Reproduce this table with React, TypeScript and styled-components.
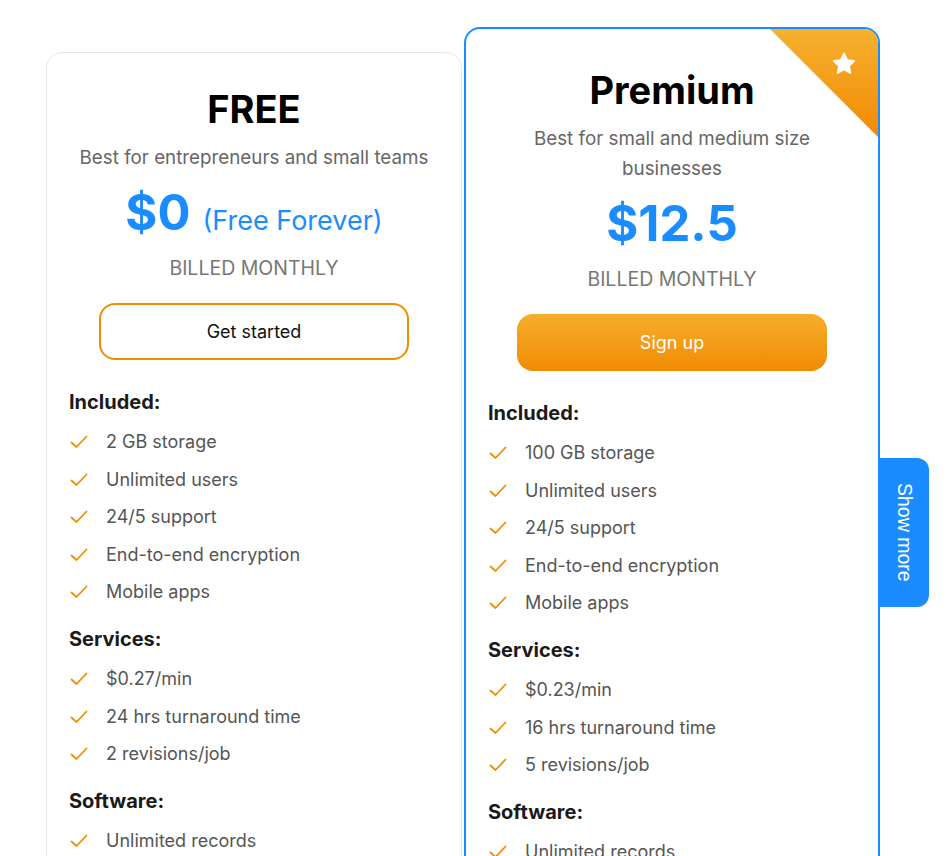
import styled, { createGlobalStyle } from 'styled-components'

const GlobalStyle = createGlobalStyle`
	html, body {
		margin: 0;
		padding: 0;
		background: #fff;
		font-family: 'Inter', 'Noto Sans', sans-serif;
		overflow: hidden;
	}
`

interface Section {
	title: string
	items: string[]
}

interface Plan {
	name: string
	subtitle: string
	price: string
	note?: string
	cta: string
	featured: boolean
	sections: Section[]
}

const plans: Plan[] = [
	{
		name: 'FREE',
		subtitle: 'Best for entrepreneurs and small teams',
		price: '$0',
		note: '(Free Forever)',
		cta: 'Get started',
		featured: false,
		sections: [
			{
				title: 'Included:',
				items: ['2 GB storage', 'Unlimited users', '24/5 support', 'End-to-end encryption', 'Mobile apps']
			},
			{ title: 'Services:', items: ['$0.27/min', '24 hrs turnaround time', '2 revisions/job'] },
			{ title: 'Software:', items: ['Unlimited records', 'Unlimited exports'] }
		]
	},
	{
		name: 'Premium',
		subtitle: 'Best for small and medium size businesses',
		price: '$12.5',
		cta: 'Sign up',
		featured: true,
		sections: [
			{
				title: 'Included:',
				items: ['100 GB storage', 'Unlimited users', '24/5 support', 'End-to-end encryption', 'Mobile apps']
			},
			{ title: 'Services:', items: ['$0.23/min', '16 hrs turnaround time', '5 revisions/job'] },
			{ title: 'Software:', items: ['Unlimited records', 'Unlimited exports'] }
		]
	}
]

const Check = (): JSX.Element => (
	<svg width="18" height="14" viewBox="0 0 18 14" fill="none">
		<path d="M1.5 7.5 L6.5 12 L16.5 1.5" stroke="#f28c00" strokeWidth="1.8" strokeLinecap="round" strokeLinejoin="round" />
	</svg>
)

const Star = (): JSX.Element => (
	<svg width="26" height="26" viewBox="0 0 24 24">
		<path
			d="M12 2.2l2.9 6.1 6.6.8-4.9 4.6 1.3 6.6L12 17.1l-5.9 3.2 1.3-6.6-4.9-4.6 6.6-.8z"
			fill="#fff"
			stroke="#fff"
			strokeWidth="1.6"
			strokeLinejoin="round"
		/>
	</svg>
)

export default function App(): JSX.Element {
	return (
		<>
			<GlobalStyle />
			<Page>
				{plans.map((plan) => (
					<Card key={plan.name} $featured={plan.featured}>
						{plan.featured && (
							<Ribbon>
								<Star />
							</Ribbon>
						)}
						<Title>{plan.name}</Title>
						<Subtitle $narrow={plan.featured}>{plan.subtitle}</Subtitle>
						<PriceRow>
							<Price>{plan.price}</Price>
							{plan.note && <PriceNote>{plan.note}</PriceNote>}
						</PriceRow>
						<Billed>BILLED MONTHLY</Billed>
						<CtaButton $filled={plan.featured}>{plan.cta}</CtaButton>
						{plan.sections.map((section) => (
							<SectionBlock key={section.title}>
								<SectionTitle>{section.title}</SectionTitle>
								<List>
									{section.items.map((item) => (
										<Item key={item}>
											<Check />
											<span>{item}</span>
										</Item>
									))}
								</List>
							</SectionBlock>
						))}
					</Card>
				))}
			</Page>
			<ShowMore>Show more</ShowMore>
		</>
	)
}

const Page = styled.div`
	display: flex;
	align-items: flex-start;
	gap: 2px;
	padding: 52px 0 0 46px;
	height: 804px;
`

const Card = styled.div<{ $featured: boolean }>`
	position: relative;
	overflow: hidden;
	box-sizing: border-box;
	width: 416px;
	display: flex;
	flex-direction: column;
	align-items: center;
	background: #fff;
	border: ${(p) => (p.$featured ? '2px solid #1a8cff' : '1.5px solid #e8e8e8')};
	border-radius: 16px;
	padding: ${(p) => (p.$featured ? '37px 22px 40px' : '32px 22px 40px')};
	margin-top: ${(p) => (p.$featured ? '-25px' : '0')};
`

const Ribbon = styled.div`
	position: absolute;
	top: 0;
	right: 0;
	width: 108px;
	height: 108px;
	background: linear-gradient(180deg, #f5b12f 0%, #f28a05 100%);
	clip-path: polygon(0 0, 100% 0, 100% 100%);
	display: flex;
	justify-content: flex-end;
	padding: 22px 21px 0 0;
	box-sizing: border-box;
`

const Title = styled.h2`
	margin: 0;
	font-size: 38px;
	line-height: 48px;
	font-weight: 700;
	color: #000;
`

const Subtitle = styled.p<{ $narrow: boolean }>`
	margin: 10px 0 0;
	max-width: ${(p) => (p.$narrow ? '300px' : '380px')};
	text-align: center;
	font-size: 18.8px;
	line-height: 30px;
	color: #666;
`

const PriceRow = styled.div`
	display: flex;
	align-items: baseline;
	gap: 12px;
	margin-top: 12px;
	color: #1a8cff;
`

const Price = styled.span`
	font-size: 49px;
	line-height: 56px;
	font-weight: 700;
`

const PriceNote = styled.span`
	font-size: 27px;
`

const Billed = styled.div`
	margin-top: 14px;
	font-size: 19.5px;
	line-height: 26px;
	color: #777;
`

const CtaButton = styled.button<{ $filled: boolean }>`
	margin-top: 22px;
	width: 310px;
	height: 57px;
	flex-shrink: 0;
	border-radius: 16px;
	font-family: inherit;
	font-size: 18px;
	cursor: pointer;
	border: ${(p) => (p.$filled ? 'none' : '2px solid #f28c00')};
	background: ${(p) => (p.$filled ? 'linear-gradient(180deg, #f5ae2c 0%, #f28b04 100%)' : '#fff')};
	color: ${(p) => (p.$filled ? '#fff' : '#111')};
`

const SectionBlock = styled.div`
	align-self: stretch;
	margin-top: 29px;
	& + & {
		margin-top: 21px;
	}
`

const SectionTitle = styled.h4`
	margin: 0;
	font-size: 20px;
	line-height: 26px;
	font-weight: 700;
	color: #1a1a1a;
`

const List = styled.ul`
	list-style: none;
	margin: 14px 0 0;
	padding: 0;
	display: flex;
	flex-direction: column;
	gap: 11.5px;
`

const Item = styled.li`
	display: flex;
	align-items: center;
	gap: 18px;
	padding-left: 1px;
	font-size: 18px;
	line-height: 26px;
	color: #555;
`

const ShowMore = styled.div`
	position: fixed;
	left: 880px;
	top: 458px;
	width: 49px;
	height: 149px;
	display: flex;
	align-items: center;
	justify-content: center;
	background: #1a8cff;
	border-radius: 0 12px 12px 0;
	color: #fff;
	font-family: 'Liberation Sans', Arial, sans-serif;
	font-size: 19.5px;
	writing-mode: vertical-rl;
`
